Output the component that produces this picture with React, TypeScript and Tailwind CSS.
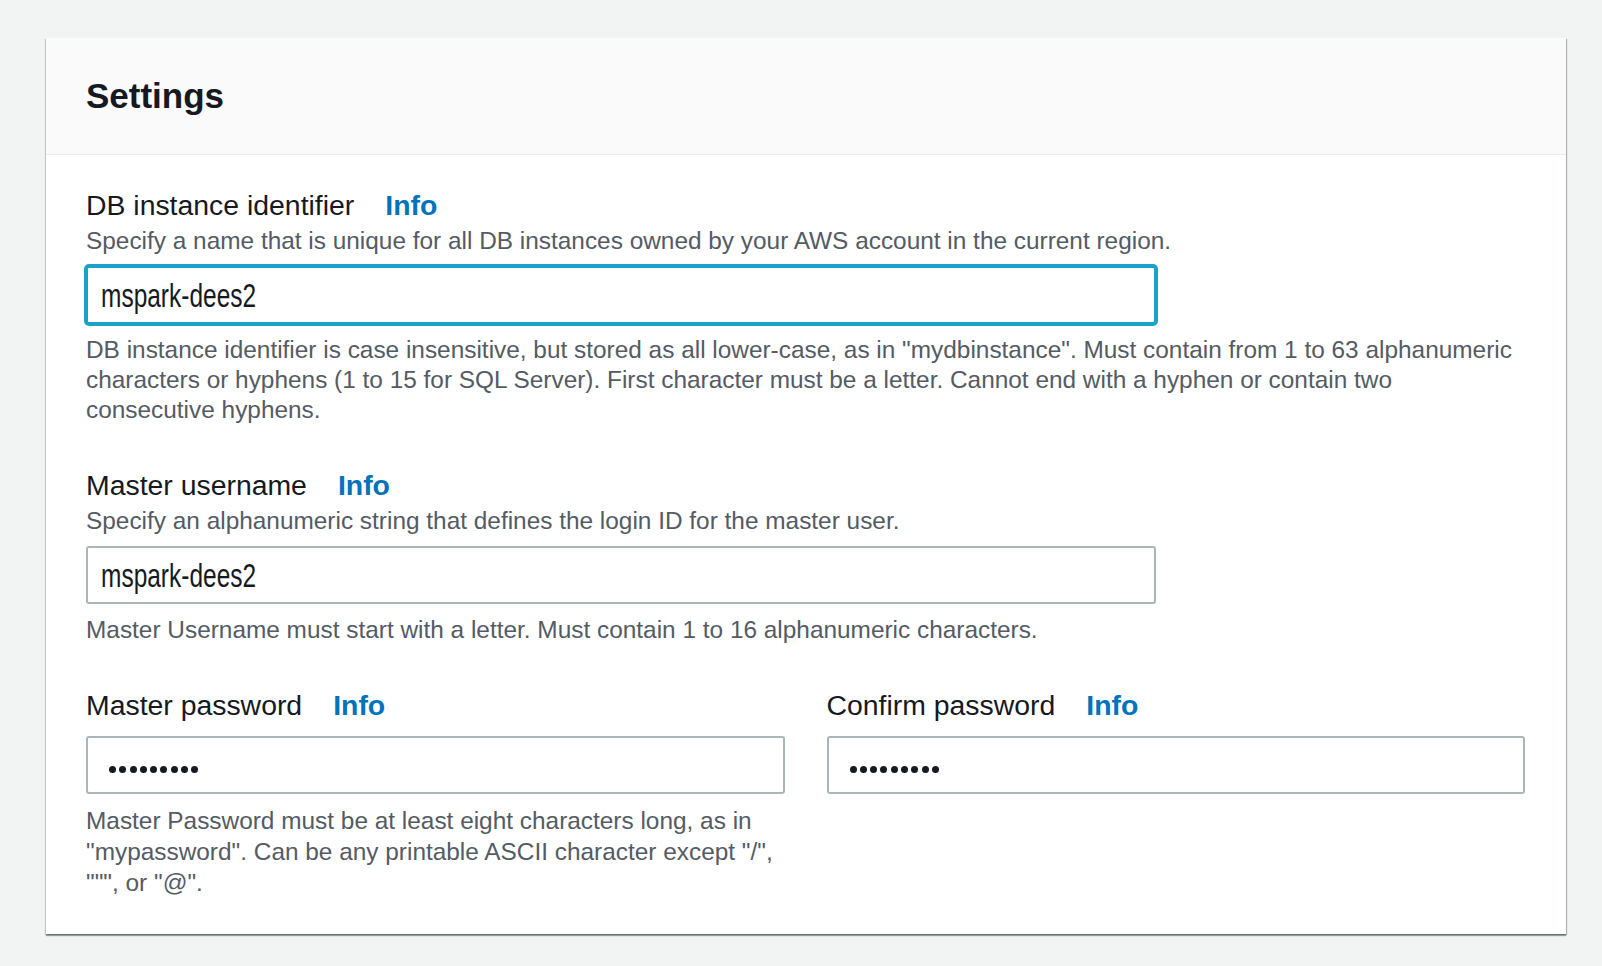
import React from 'react'

const font = { fontFamily: '"Liberation Sans", Arial, sans-serif' }

const Label = ({ text }: { text: string }) => (
    <div className="flex items-center h-[36px] text-[28.4px] text-[#16191f]">
        <span>{text}</span>
        <a className="ml-[31px] font-bold text-[#0073bb]">Info</a>
    </div>
)

const TextValue = ({ value, focused }: { value: string, focused?: boolean }) => (
    <div className={`h-[58px] w-full rounded-[3px] border-2 bg-white flex items-center pl-[13px] overflow-hidden ${focused ? 'border-[#1ba2c9] shadow-[0_0_0_2px_#1ba2c9]' : 'border-[#aab7b8]'}`}>
        <span className="inline-block origin-left scale-x-[0.72] text-[34px] text-[#16191f] whitespace-nowrap">{value}</span>
    </div>
)

const Dots = () => (
    <div className="h-[58px] w-full rounded-[3px] border-2 border-[#aab7b8] bg-white flex items-center pl-[21px] pt-[8px]">
        <div className="flex gap-[3.3px]">
            {Array.from({ length: 9 }).map((_, i) => (
                <span key={i} className="w-[7px] h-[7px] rounded-full bg-[#16191f]" />
            ))}
        </div>
    </div>
)

export default function App() {
    return (
        <div style={font} className="min-h-screen w-full bg-[#f2f3f3] pt-[38px] pl-[46px] pr-[36px] pb-[31px]">
            <div className="bg-white shadow-[0_2px_1px_0_rgba(0,28,36,0.35),1px_1px_1px_0_rgba(0,28,36,0.25),-1px_1px_1px_0_rgba(0,28,36,0.15)]">
                <div className="h-[117px] bg-[#fafafa] border-b border-[#eaeded] flex items-center pl-[40px]">
                    <h2 className="text-[35px] font-bold text-[#16191f]">Settings</h2>
                </div>

                <div className="pt-[32px] pb-[36px] pl-[40px] pr-[41px]">
                    {/* DB instance identifier */}
                    <div>
                        <Label text="DB instance identifier" />
                        <p className="mt-[3px] text-[24.4px] leading-[30px] text-[#545b64] whitespace-nowrap">Specify a name that is unique for all DB instances owned by your AWS account in the current region.</p>
                        <div className="mt-[10px] w-[1070px]">
                            <TextValue value="mspark-dees2" focused />
                        </div>
                        <p className="mt-[11px] text-[24.4px] leading-[30px] text-[#545b64]">
                            <span className="block whitespace-nowrap">DB instance identifier is case insensitive, but stored as all lower-case, as in "mydbinstance". Must contain from 1 to 63 alphanumeric</span>
                            <span className="block whitespace-nowrap">characters or hyphens (1 to 15 for SQL Server). First character must be a letter. Cannot end with a hyphen or contain two</span>
                            <span className="block whitespace-nowrap">consecutive hyphens.</span>
                        </p>
                    </div>

                    {/* Master username */}
                    <div className="mt-[42px]">
                        <Label text="Master username" />
                        <p className="mt-[3px] text-[24.4px] leading-[30px] text-[#545b64] whitespace-nowrap">Specify an alphanumeric string that defines the login ID for the master user.</p>
                        <div className="mt-[10px] w-[1070px]">
                            <TextValue value="mspark-dees2" />
                        </div>
                        <p className="mt-[11px] text-[24.4px] leading-[30px] text-[#545b64] whitespace-nowrap">Master Username must start with a letter. Must contain 1 to 16 alphanumeric characters.</p>
                    </div>

                    {/* Passwords */}
                    <div className="mt-[42px] grid grid-cols-2 gap-x-[42px]">
                        <div>
                            <Label text="Master password" />
                            <div className="mt-[13px]">
                                <Dots />
                            </div>
                            <p className="mt-[11px] text-[24.4px] leading-[31px] text-[#545b64]">
                                <span className="block whitespace-nowrap">Master Password must be at least eight characters long, as in</span>
                                <span className="block whitespace-nowrap">"mypassword". Can be any printable ASCII character except "/",</span>
                                <span className="block whitespace-nowrap">""", or "@".</span>
                            </p>
                        </div>
                        <div>
                            <Label text="Confirm password" />
                            <div className="mt-[13px]">
                                <Dots />
                            </div>
                        </div>
                    </div>
                </div>
            </div>
        </div>
    )
}
